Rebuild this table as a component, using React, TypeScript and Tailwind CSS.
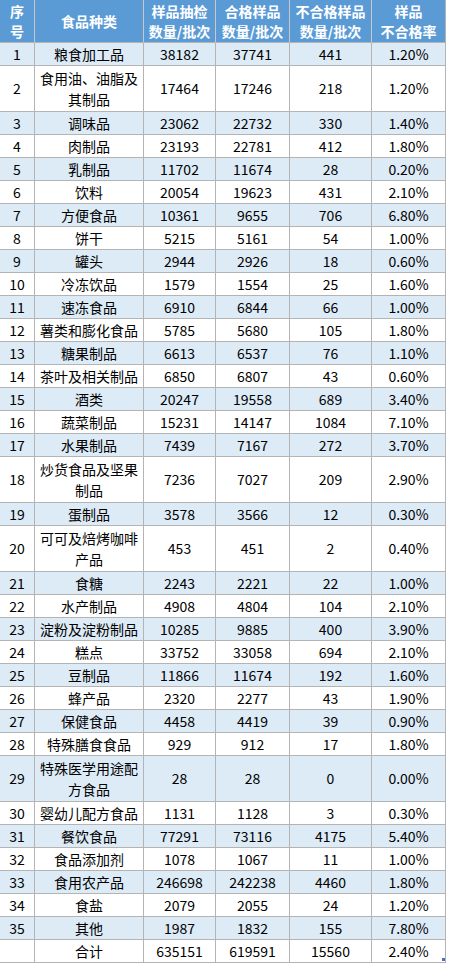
import React from 'react';

type Row = [string, string, string, string, string, string];

const rows: Row[] = [
  ['1', '粮食加工品', '38182', '37741', '441', '1.20%'],
  ['2', '食用油、油脂及其制品', '17464', '17246', '218', '1.20%'],
  ['3', '调味品', '23062', '22732', '330', '1.40%'],
  ['4', '肉制品', '23193', '22781', '412', '1.80%'],
  ['5', '乳制品', '11702', '11674', '28', '0.20%'],
  ['6', '饮料', '20054', '19623', '431', '2.10%'],
  ['7', '方便食品', '10361', '9655', '706', '6.80%'],
  ['8', '饼干', '5215', '5161', '54', '1.00%'],
  ['9', '罐头', '2944', '2926', '18', '0.60%'],
  ['10', '冷冻饮品', '1579', '1554', '25', '1.60%'],
  ['11', '速冻食品', '6910', '6844', '66', '1.00%'],
  ['12', '薯类和膨化食品', '5785', '5680', '105', '1.80%'],
  ['13', '糖果制品', '6613', '6537', '76', '1.10%'],
  ['14', '茶叶及相关制品', '6850', '6807', '43', '0.60%'],
  ['15', '酒类', '20247', '19558', '689', '3.40%'],
  ['16', '蔬菜制品', '15231', '14147', '1084', '7.10%'],
  ['17', '水果制品', '7439', '7167', '272', '3.70%'],
  ['18', '炒货食品及坚果制品', '7236', '7027', '209', '2.90%'],
  ['19', '蛋制品', '3578', '3566', '12', '0.30%'],
  ['20', '可可及焙烤咖啡产品', '453', '451', '2', '0.40%'],
  ['21', '食糖', '2243', '2221', '22', '1.00%'],
  ['22', '水产制品', '4908', '4804', '104', '2.10%'],
  ['23', '淀粉及淀粉制品', '10285', '9885', '400', '3.90%'],
  ['24', '糕点', '33752', '33058', '694', '2.10%'],
  ['25', '豆制品', '11866', '11674', '192', '1.60%'],
  ['26', '蜂产品', '2320', '2277', '43', '1.90%'],
  ['27', '保健食品', '4458', '4419', '39', '0.90%'],
  ['28', '特殊膳食食品', '929', '912', '17', '1.80%'],
  ['29', '特殊医学用途配方食品', '28', '28', '0', '0.00%'],
  ['30', '婴幼儿配方食品', '1131', '1128', '3', '0.30%'],
  ['31', '餐饮食品', '77291', '73116', '4175', '5.40%'],
  ['32', '食品添加剂', '1078', '1067', '11', '1.00%'],
  ['33', '食用农产品', '246698', '242238', '4460', '1.80%'],
  ['34', '食盐', '2079', '2055', '24', '1.20%'],
  ['35', '其他', '1987', '1832', '155', '7.80%'],
  ['', '合计', '635151', '619591', '15560', '2.40%'],
];

const cols = 'grid grid-cols-[35px_109px_72px_74px_82px_74px]';
const cell = 'flex items-center justify-center text-center border-r border-b border-[#b4b4b4]';

export default function App() {
  return (
    <div
      className="w-[449px] h-[963px] bg-white text-black text-[14px] leading-[21px] overflow-hidden"
      style={{ fontFamily: '"Noto Sans CJK SC", "Noto Sans", sans-serif' }}
    >
      <div className="relative w-[446px]">
        {/* header */}
        <div className={`${cols} h-[43px] bg-[#5b9bd5] text-white font-bold leading-[20px]`}>
          <div className={`${cell} border-r-[#c8c8c8]`}>序<br />号</div>
          <div className={`${cell} border-r-[#c8c8c8]`}>食品种类</div>
          <div className={`${cell} border-r-[#c8c8c8]`}>样品抽检<br />数量/批次</div>
          <div className={`${cell} border-r-[#c8c8c8]`}>合格样品<br />数量/批次</div>
          <div className={`${cell} border-r-[#c8c8c8]`}>不合格样品<br />数量/批次</div>
          <div className={cell}>样品<br />不合格率</div>
        </div>

        {rows.map((r, i) => {
          const tall = r[1].length > 7;
          const bg = i % 2 === 0 ? 'bg-[#ddebf7]' : 'bg-white';
          return (
            <div key={i} className={`${cols} ${tall ? 'h-[46px]' : 'h-[23px]'} ${bg}`}>
              {r.map((v, j) => (
                <div key={j} className={`${cell} ${j === 1 ? 'px-[3px]' : ''}`}>
                  {v}
                </div>
              ))}
            </div>
          );
        })}

        {/* table resize handle */}
        <div className="absolute right-[1px] bottom-[2px] w-[3px] h-[3px] bg-[#4a6fc4]" />
      </div>
    </div>
  );
}
